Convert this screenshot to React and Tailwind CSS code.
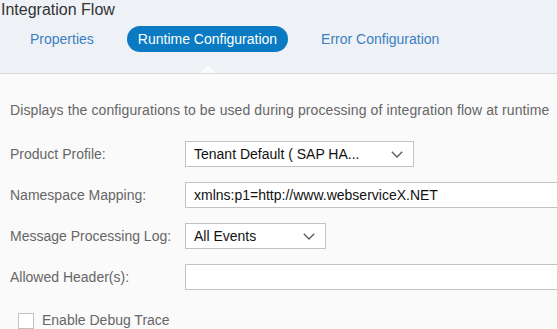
import React from "react";

function Chevron() {
  return (
    <svg width="12" height="7" viewBox="0 0 12 7" className="shrink-0">
      <polyline points="0.8,0.8 6,6 11.2,0.8" fill="none" stroke="#5a5a5a" strokeWidth="1.3" />
    </svg>
  );
}

function Select({ value, width }) {
  return (
    <div className={`flex items-center justify-between h-[26px] ${width} bg-white border border-[#c2c2c2] pl-[8px] pr-[10px] text-[14px] text-[#111]`}>
      <span className="whitespace-nowrap">{value}</span>
      <Chevron />
    </div>
  );
}

function Row({ label, children }) {
  return (
    <div className="flex items-center h-[26px]">
      <div className="w-[175px] shrink-0 text-[14px] text-[#666]">{label}</div>
      {children}
    </div>
  );
}

export default function App() {
  return (
    <div className="w-[557px] h-[329px] overflow-hidden bg-[#fafafa] font-['Liberation_Sans',Arial,sans-serif]">
      <header className="relative h-[74px] bg-[#eef2f7] border-b border-[#dbdbdb]">
        <div className="pl-[1px] pt-[1px] text-[16px] leading-[18px] text-[#333]">Integration Flow</div>
        <nav className="flex items-center gap-[22px] ml-[19px] mt-[7px] text-[14px]">
          <div className="h-[26px] leading-[26px] px-[11px] text-[#3c7fc2]">Properties</div>
          <div className="h-[26px] leading-[26px] px-[11px] rounded-full bg-[#0a7bc2] text-white">Runtime Configuration</div>
          <div className="h-[26px] leading-[26px] px-[11px] text-[#3c7fc2]">Error Configuration</div>
        </nav>
        <div className="absolute bottom-0 left-[200px] w-0 h-0 border-l-[8px] border-r-[8px] border-b-[8px] border-l-transparent border-r-transparent border-b-[#fafafa]" />
      </header>
      <main className="px-[10px] pt-[28px]">
        <p className="text-[14px] leading-[16px] text-[#666] whitespace-nowrap tracking-[0.1px]">
          Displays the configurations to be used during processing of integration flow at runtime
        </p>
        <div className="mt-[23px] flex flex-col gap-[15px]">
          <Row label="Product Profile:">
            <Select value="Tenant Default ( SAP HA..." width="w-[229px]" />
          </Row>
          <Row label="Namespace Mapping:">
            <div className="h-[26px] w-[420px] shrink-0 bg-white border border-[#c2c2c2] pl-[8px] flex items-center text-[14px] text-[#111] whitespace-nowrap">
              xmlns:p1=http://www.webserviceX.NET
            </div>
          </Row>
          <Row label="Message Processing Log:">
            <Select value="All Events" width="w-[141px]" />
          </Row>
          <Row label="Allowed Header(s):">
            <div className="h-[26px] w-[420px] shrink-0 bg-white border border-[#c2c2c2]" />
          </Row>
        </div>
        <div className="mt-[20px] ml-[8px] flex items-center gap-[8px]">
          <div className="w-[16px] h-[16px] border-[1.5px] border-[#c0c0c0] bg-white" />
          <span className="text-[14px] text-[#666]">Enable Debug Trace</span>
        </div>
      </main>
    </div>
  );
}
